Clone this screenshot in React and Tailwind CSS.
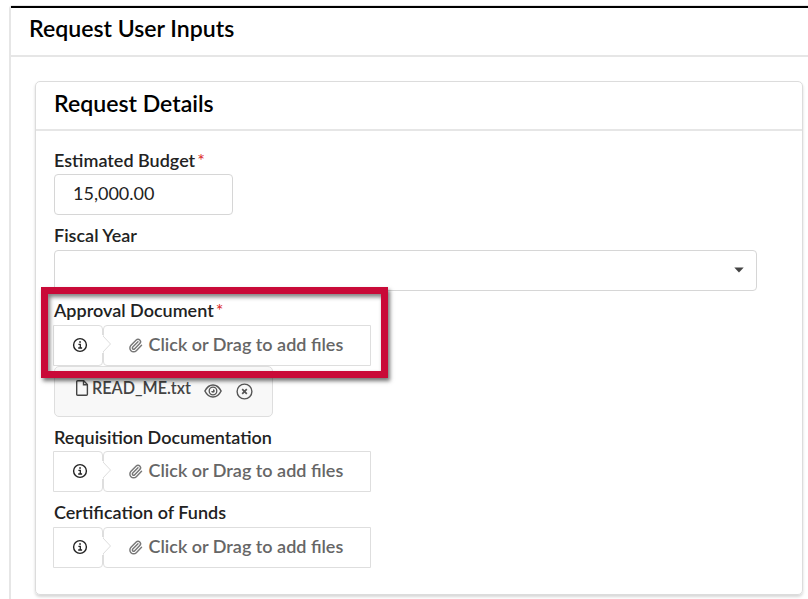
import { useState } from "react";
import { Paperclip } from "lucide-react";

const InfoIcon = () => (
  <svg width="16" height="16" viewBox="0 0 16 16" fill="none" stroke="#222" className="shrink-0">
    <circle cx="8" cy="8" r="6.4" strokeWidth="1.4" />
    <path d="M6.4 7.3h1.9v3.4M6.2 11h3.9" strokeWidth="1.3" />
    <path d="M7.2 5h1.7" strokeWidth="1.6" />
  </svg>
);

const FileIcon = () => (
  <svg width="13" height="16" viewBox="0 0 13 16" fill="none" stroke="#444" strokeWidth="1.4" className="shrink-0">
    <path d="M1.7.7h6l3.7 3.8v9.7q0 1-1 1H1.7q-1 0-1-1V1.7q0-1 1-1Z" />
    <path d="M7.5.8v3.9h3.9" />
  </svg>
);

const EyeIcon = () => (
  <svg width="18" height="14" viewBox="0 0 18 14" fill="none" stroke="#555" strokeWidth="1.5" className="shrink-0">
    <path d="M.9 7C5-1.1 13-1.1 17.1 7 13 15.1 5 15.1.9 7Z" />
    <circle cx="9" cy="7" r="3.8" strokeWidth="1.3" />
    <path d="M9 5.2V7H7.2A1.8 1.8 0 1 0 9 5.2Z" fill="#555" stroke="none" />
  </svg>
);

const RemoveIcon = () => (
  <svg width="17" height="17" viewBox="0 0 17 17" fill="none" stroke="#555" strokeWidth="1.4" className="shrink-0">
    <circle cx="8.5" cy="8.5" r="7.4" />
    <path d="m6.2 6.2 4.6 4.6m0-4.6-4.6 4.6" strokeWidth="1.7" />
  </svg>
);

const Label = ({ children, required }) => (
  <label className="flex h-6 items-center pb-[4px] whitespace-nowrap text-[18px] leading-[20px] font-semibold text-[#222]">
    {children}
    {required && <span className="ml-[2px] font-normal text-[#db2828]">*</span>}
  </label>
);

const FileDrop = () => (
  <div className="relative -ml-px flex h-[41px] w-[318px]">
    <div className="flex w-[50px] items-center justify-center rounded-r-[4px] border border-[#dedede] pb-[2px] pl-[3px]">
      <InfoIcon />
    </div>
    <button
      type="button"
      className="flex flex-1 items-center rounded-l-[4px] border border-[#dedede] bg-white pb-[4px] pl-[24px] text-[18px] leading-6 font-semibold whitespace-nowrap text-[#666]"
    >
      <Paperclip size={15} strokeWidth={2.3} color="#777" className="mt-[4px] shrink-0" />
      <span className="ml-[5.5px]">Click or Drag to add files</span>
    </button>
    {/* pointer from the info box into the drop area */}
    <svg width="11" height="18" viewBox="0 0 11 18" className="absolute top-[10px] left-[48px]">
      <path d="M0 0h2l7.5 9L2 18H0Z" fill="#fff" />
      <path d="m2 1 7.5 8L2 17" fill="none" stroke="#dedede" />
    </svg>
  </div>
);

export default function App() {
  const [budget, setBudget] = useState("15,000.00");

  return (
    <div className="h-[599px] overflow-hidden bg-white pt-[5px] pl-[9px] font-[Lato,sans-serif]">
      <div className="h-[620px] rounded-tl-[4px] border-t border-l-2 border-[#e6e6e6]">
        <header className="flex h-[51px] items-center border-t-2 border-b-2 border-t-black border-b-[#e6e6e6] pb-[7px] pl-[18px]">
          <h1 className="text-[23.1px] font-semibold text-black">Request User Inputs</h1>
        </header>
        <section className="mt-6 ml-6 h-[514px] w-[768px] rounded-[5px] border border-[#dcdcdc] shadow-[0_2px_3px_rgba(0,0,0,0.16)]">
          <header className="flex h-[49px] items-center border-b-2 border-[#e6e6e6] pb-[5px] pl-[18px]">
            <h2 className="text-[23.1px] font-semibold text-black">Request Details</h2>
          </header>
          <form className="pt-[19px] pl-[18px]">
            <Label required>Estimated Budget</Label>
            <input
              value={budget}
              onChange={(e) => setBudget(e.target.value)}
              className="block h-[41px] w-[179px] rounded-[4px] border border-[#d6d6d6] pb-[3px] pl-[18px] text-[18px] text-[#222]"
            />
            <div className="mt-[10px]">
              <Label>Fiscal Year</Label>
              <div className="mt-px flex h-[41px] w-[703px] items-center justify-end rounded-[4px] border border-[#d6d6d6] pr-3 pb-[2px]">
                <svg width="10" height="6" viewBox="0 0 10 6">
                  <path d="M.3.5h9.4L5 5.5Z" fill="#444" />
                </svg>
              </div>
            </div>
            <div className="relative mt-[9px]">
              <Label required>Approval Document</Label>
              <div className="mt-px">
                <FileDrop />
              </div>
              <div className="flex h-[51px] w-[219px] items-center rounded-[5px] border border-[#dedede] bg-[#f8f8f8] pb-[7px] pl-[21px] text-[16.2px] font-semibold text-[#444]">
                <FileIcon />
                <span className="ml-[3px]">READ_ME.txt</span>
                <span className="mt-[6px] ml-[13px] flex items-center gap-[14px]">
                  <EyeIcon />
                  <RemoveIcon />
                </span>
              </div>
              <div className="absolute -top-[13px] -left-[13px] h-[91px] w-[347px] border-[7px] border-[#c90a38] shadow-[2px_3px_4px_rgba(0,0,0,0.55),inset_2px_3px_4px_rgba(0,0,0,0.5)]" />
            </div>
            <div className="mt-[10px]">
              <Label>Requisition Documentation</Label>
              <FileDrop />
            </div>
            <div className="mt-[10px]">
              <Label>Certification of Funds</Label>
              <div className="mt-px">
                <FileDrop />
              </div>
            </div>
          </form>
        </section>
      </div>
    </div>
  );
}
